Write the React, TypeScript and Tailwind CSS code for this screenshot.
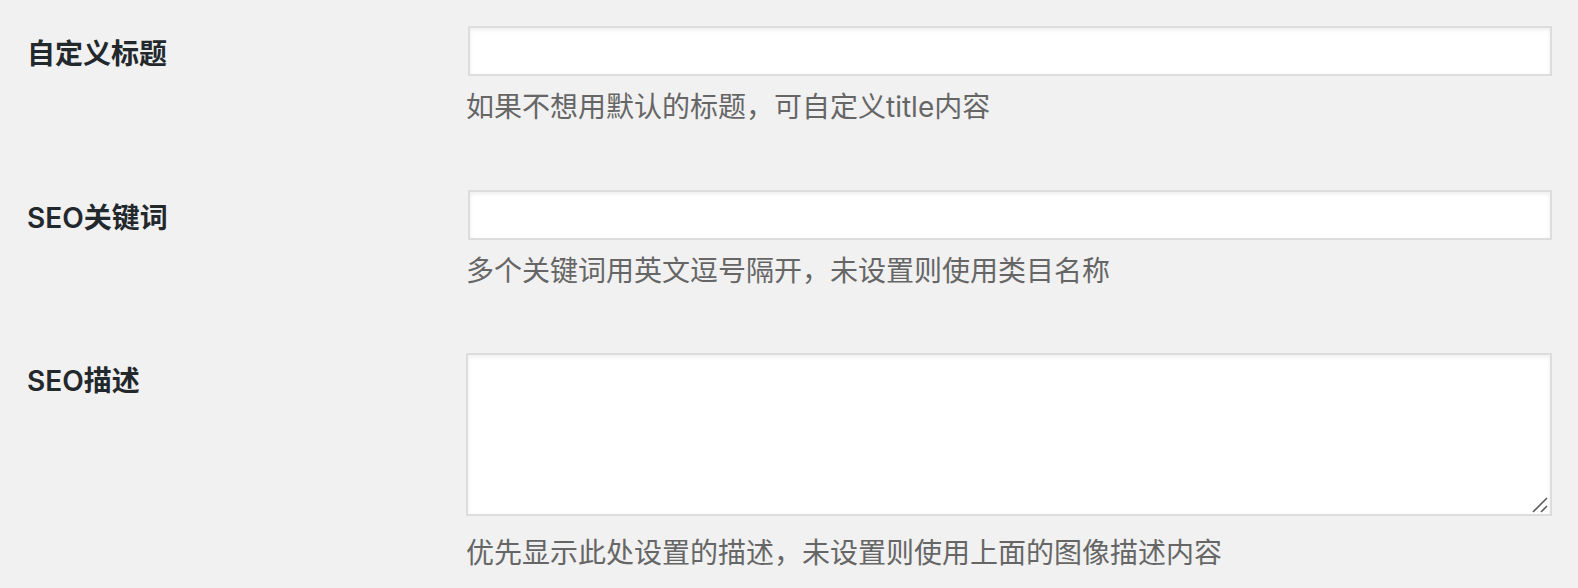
import type { ReactNode } from 'react'

const font = { fontFamily: 'Inter, "Noto Sans CJK SC", sans-serif' }

function Row({ label, children, className = '' }: { label: string; children: ReactNode; className?: string }) {
  return (
    <div className={`flex ${className}`}>
      <div className="w-[441px] shrink-0 pt-[8px] text-[28px] leading-[40px] font-semibold text-[#23282d]">
        {label}
      </div>
      <div className="w-[1084px]">{children}</div>
    </div>
  )
}

const inputCls =
  'block w-full h-[50px] bg-white border-2 border-[#dddddd] shadow-[inset_0_2px_4px_rgba(0,0,0,0.07)] outline-none px-3 text-[28px]'

const descCls = 'ml-[-2px] text-[28px] leading-[40px] text-[#666666]'

export default function App() {
  return (
    <div className="min-h-[588px] bg-[#f1f1f1] pl-[27px] pt-[26px]" style={font}>
      <Row label="自定义标题">
        <input type="text" className={inputCls} />
        <p className={`mt-[11px] ${descCls}`}>如果不想用默认的标题，可自定义title内容</p>
      </Row>

      <Row label="SEO关键词" className="mt-[63px]">
        <input type="text" className={inputCls} />
        <p className={`mt-[11px] ${descCls}`}>多个关键词用英文逗号隔开，未设置则使用类目名称</p>
      </Row>

      <Row label="SEO描述" className="mt-[62px]">
        <div className="relative ml-[-2px]">
          <textarea className="block w-full h-[163px] resize-none bg-white border-2 border-[#dddddd] shadow-[inset_0_2px_4px_rgba(0,0,0,0.07)] outline-none p-3 text-[28px]" />
          {/* resize grip */}
          <svg className="absolute right-[4px] bottom-[3px]" width="16" height="16" viewBox="0 0 16 16">
            <path d="M1 15 L15 1 M9 15 L15 9" stroke="#5a5a5a" strokeWidth="1.6" fill="none" />
          </svg>
        </div>
        <p className={`mt-[17px] ${descCls}`}>优先显示此处设置的描述，未设置则使用上面的图像描述内容</p>
      </Row>
    </div>
  )
}
